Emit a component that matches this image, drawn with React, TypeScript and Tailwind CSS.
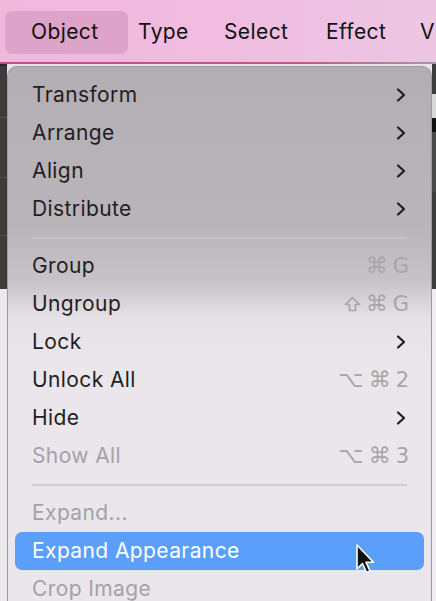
import React from 'react';

type Item =
  | { kind: 'sep' }
  | {
      kind: 'item';
      label: string;
      sub?: boolean;
      keys?: string[];
      disabled?: boolean;
      active?: boolean;
    };

const items: Item[] = [
  { kind: 'item', label: 'Transform', sub: true },
  { kind: 'item', label: 'Arrange', sub: true },
  { kind: 'item', label: 'Align', sub: true },
  { kind: 'item', label: 'Distribute', sub: true },
  { kind: 'sep' },
  { kind: 'item', label: 'Group', keys: ['⌘', 'G'] },
  { kind: 'item', label: 'Ungroup', keys: ['shift', '⌘', 'G'] },
  { kind: 'item', label: 'Lock', sub: true },
  { kind: 'item', label: 'Unlock All', keys: ['⌥', '⌘', '2'] },
  { kind: 'item', label: 'Hide', sub: true },
  { kind: 'item', label: 'Show All', keys: ['⌥', '⌘', '3'], disabled: true },
  { kind: 'sep' },
  { kind: 'item', label: 'Expand...', disabled: true },
  { kind: 'item', label: 'Expand Appearance', active: true },
  { kind: 'item', label: 'Crop Image', disabled: true },
];

function Chevron() {
  return (
    <svg width="12" height="16" viewBox="0 0 12 16" className="mr-[2px]">
      <path d="M3 2.5 L9 8 L3 13.5" fill="none" stroke="#1e1e1e" strokeWidth="2.2" strokeLinecap="round" strokeLinejoin="round" />
    </svg>
  );
}

function ShiftGlyph() {
  return (
    <svg width="17" height="16" viewBox="0 0 17 16">
      <path
        d="M8.5 1.5 L15.5 8.5 L11.5 8.5 L11.5 14.5 L5.5 14.5 L5.5 8.5 L1.5 8.5 Z"
        fill="none"
        stroke="#a8a4a9"
        strokeWidth="1.7"
        strokeLinejoin="round"
      />
    </svg>
  );
}

function Cursor() {
  return (
    <svg width="22" height="32" viewBox="0 0 22 32" className="absolute left-[340px] top-[12px]">
      <path
        d="M2 1 L2 25 L7.5 19.5 L11.5 28.5 L15 27 L11 18.2 L18.5 18.2 Z"
        fill="#111"
        stroke="#fff"
        strokeWidth="1.6"
        strokeLinejoin="round"
      />
    </svg>
  );
}

export default function App() {
  return (
    <div
      className="w-[436px] h-[601px] overflow-hidden flex flex-col bg-[#e6e4e8]"
      style={{ fontFamily: 'Inter, "Noto Sans", sans-serif' }}
    >
      {/* menu bar */}
      <div className="h-[64px] shrink-0 flex items-center bg-gradient-to-r from-[#f1b8dc] via-[#f0bce0] to-[#ecc6e3] text-[21px] tracking-[0.4px] text-[#111] relative whitespace-nowrap">
        <div className="ml-[5px] w-[123px] h-[43px] rounded-[7px] bg-[#dea3c8] flex items-center pl-[26px]">Object</div>
        <span className="ml-[10px] w-[86px] shrink-0">Type</span>
        <span className="w-[102px] shrink-0">Select</span>
        <span className="w-[94px] shrink-0">Effect</span>
        <span>V</span>
        <div className="absolute left-0 right-0 bottom-0 h-[2px] bg-gradient-to-r from-[#c54a8c] via-[#c3587a] via-70% to-[#9e9aa2]" />
      </div>

      <div className="flex flex-1 min-h-0">
        {/* background strip left */}
        <div className="w-[7px] shrink-0 flex flex-col">
          <div className="h-[225px] bg-[#3b3b3b] border-t-[2px] border-[#2a2a2a] flex flex-col">
            <div className="h-[52px] border-b border-[#555]" />
            <div className="h-[60px] border-b border-[#555]" />
            <div className="h-[58px] border-b border-[#555]" />
          </div>
          <div className="flex-1 bg-[#ebe9ec]" />
        </div>

        {/* menu panel */}
        <div className="w-[425px] shrink-0 mt-[2px] rounded-t-[10px] border border-[#9d989f] border-b-0 bg-[linear-gradient(180deg,#b3aeb4_0%,#bab5bb_30%,#c7c2c8_40%,#e6e1e7_47%,#ebe6ec_55%,#ebe6ec_100%)] pt-[9px] px-[7px]">
          {items.map((it, i) => {
            if (it.kind === 'sep') {
              return (
                <div key={i} className="h-[19px] flex items-center px-[17px]">
                  <div className="h-[2px] w-full bg-[#cbc6cc]/80" />
                </div>
              );
            }
            const color = it.active ? 'text-white' : it.disabled ? 'text-[#a5a1a6]' : 'text-[#1f1e20]';
            return (
              <div
                key={i}
                className={`relative h-[38px] flex items-center justify-between pl-[17px] pr-[15px] rounded-[7px] ${color} ${it.active ? 'bg-[#5b9ffb]' : ''}`}
              >
                <span className="text-[21px] tracking-[0.4px]">{it.label}</span>
                {it.sub && <Chevron />}
                {it.keys && (
                  <span
                    className="flex items-center gap-[5px] text-[#a8a4a9]"
                    style={{ fontFamily: '"DejaVu Sans", Inter, sans-serif' }}
                  >
                    {it.keys.map((k, j) =>
                      k === 'shift' ? (
                        <ShiftGlyph key={j} />
                      ) : (
                        <span key={j} className={/[⌘⌥]/.test(k) ? 'text-[22px] leading-none' : 'text-[21px] leading-none'}>
                          {k}
                        </span>
                      ),
                    )}
                  </span>
                )}
                {it.active && <Cursor />}
              </div>
            );
          })}
        </div>

        {/* background strip right */}
        <div className="flex-1 flex flex-col">
          <div className="h-[225px] bg-[#3d3d3d] flex flex-col">
            <div className="h-[30px]" />
            <div className="h-[24px] bg-[#d8d8d8]" />
            <div className="h-[14px] bg-[#111]" />
            <div className="h-[60px] bg-[#4a4a4a]" />
          </div>
          <div className="flex-1 bg-[#f0eef1]" />
        </div>
      </div>
    </div>
  );
}
